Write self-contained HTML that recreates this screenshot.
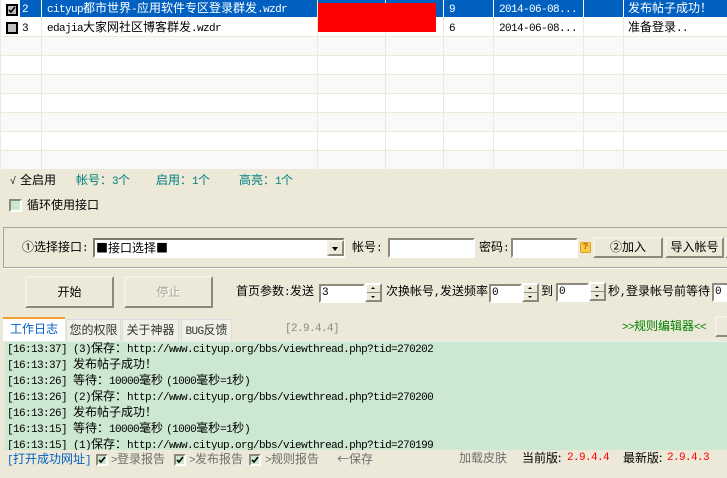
<!DOCTYPE html>
<html><head><meta charset="utf-8"><style>
html,body{margin:0;padding:0}
body{width:727px;height:478px;overflow:hidden;position:relative;background:#ece9d8;font:12px/16px "WenQuanYi Zen Hei","Noto Sans CJK SC",sans-serif;color:#000}
div,span.t{position:absolute;white-space:nowrap;box-sizing:border-box}
i{font:normal 11px/16px "Liberation Mono",monospace;letter-spacing:-.6px}
.h{left:0;width:727px;height:1px;background:#ece9d8}
.v{top:0;width:1px;height:169px;background:#ece9d8}
.in{background:#fff;border:2px solid;border-color:#8c8a7c #fff #fff #8c8a7c;padding-left:1px;font:11px/15px "Liberation Mono",monospace}
.b{background:#ece9d8;border:2px solid;border-color:#f4f2e8 #8c8a7c #8c8a7c #f4f2e8;text-align:center}
.cb{width:12px;height:12px;border:2px solid;border-color:#8c8a7c #fff #fff #8c8a7c;background:#cce8d0}
.cb svg,.ck svg{position:absolute;left:0;top:0}
.ck{left:6px;width:12px;height:12px;border:2px solid #000;background:#c0c0c0}
.sp{width:17px;background:#ece9d8;border:2px solid;border-color:#fff #8c8a7c #8c8a7c #fff}
.sp:before{content:"";position:absolute;left:4px;top:2px;border:2px solid transparent;border-top:0;border-bottom:2px solid #000}
.sp:after{content:"";position:absolute;left:4px;bottom:2px;border:2px solid transparent;border-bottom:0;border-top:2px solid #000}
.sp b{position:absolute;left:0;right:0;top:50%;height:1px;margin-top:-1px;background:#8c8a7c}
.w{color:#fff}.te{color:#008080}.g{color:#6e6e6e}.r{color:#f00}
.tab{top:319px;height:22px;background:#f0f0e6;border:1px solid #d8dce4;border-bottom:0;color:#333;text-align:center;line-height:20px}
.red{font:11px/16px "Liberation Mono",monospace;color:#f00;letter-spacing:-.6px}
.s{margin-left:3px}
</style></head><body>
<div style="left:0;top:0;width:727px;height:169px;background:#fff"></div>
<div style="left:20px;top:0;width:707px;height:17px;background:#0060c0"></div>
<div style="left:0;top:36px;width:727px;height:19px;background:#f9f9f9"></div>
<div style="left:0;top:74px;width:727px;height:19px;background:#f9f9f9"></div>
<div style="left:0;top:112px;width:727px;height:19px;background:#f9f9f9"></div>
<div style="left:0;top:150px;width:727px;height:19px;background:#f9f9f9"></div>
<div class="h" style="top:17px;background:#fff"></div><div class="h" style="top:36px"></div><div class="h" style="top:55px"></div><div class="h" style="top:74px"></div><div class="h" style="top:93px"></div><div class="h" style="top:112px"></div><div class="h" style="top:131px"></div><div class="h" style="top:150px"></div>
<div class="v" style="left:0"></div>
<div class="v" style="left:41px"></div><div class="v" style="left:317px"></div><div class="v" style="left:385px"></div><div class="v" style="left:443px"></div><div class="v" style="left:493px"></div><div class="v" style="left:583px"></div><div class="v" style="left:623px"></div>
<div style="left:41px;top:0;width:1px;height:17px;background:#fff"></div>
<div style="left:385px;top:0;width:1px;height:17px;background:#fff"></div>
<div style="left:443px;top:0;width:1px;height:17px;background:#fff"></div>
<div style="left:493px;top:0;width:1px;height:17px;background:#fff"></div>
<div style="left:583px;top:0;width:1px;height:17px;background:#fff"></div>
<div style="left:623px;top:0;width:1px;height:17px;background:#fff"></div>
<div style="left:318px;top:3px;width:118px;height:29px;background:#f00"></div>

<div class="ck" style="top:4px"><svg width="8" height="8"><path d="M1 4l2 2 4-5" fill="none" stroke="#000" stroke-width="1.6"/></svg></div>
<div class="ck" style="top:22px"></div>
<span class="t w" style="left:22px;top:0"><i>2</i></span>
<span class="t" style="left:22px;top:19px"><i>3</i></span>
<span class="t w" style="left:47px;top:0"><i>cityup</i>都市世界<i>-</i>应用软件专区登录群发<i>.wzdr</i></span>
<span class="t" style="left:47px;top:19px"><i>edajia</i>大家网社区博客群发<i>.wzdr</i></span>
<span class="t w" style="left:449px;top:0"><i>9</i></span>
<span class="t" style="left:449px;top:19px"><i>6</i></span>
<span class="t w" style="left:499px;top:0"><i>2014-06-08...</i></span>
<span class="t" style="left:499px;top:19px"><i>2014-06-08...</i></span>
<span class="t w" style="left:628px;top:0">发布帖子成功&#xFF01;</span>
<span class="t" style="left:628px;top:19px">准备登录<i>..</i></span>

<span class="t" style="left:10px;top:172px"><i style="letter-spacing:0;font-size:10px">√</i><span style="margin-left:4px">全启用</span></span>
<span class="t te" style="left:76px;top:172px">帐号&#xFF1A;<i>3</i>个</span>
<span class="t te" style="left:156px;top:172px">启用&#xFF1A;<i>1</i>个</span>
<span class="t te" style="left:239px;top:172px">高亮&#xFF1A;<i>1</i>个</span>
<div class="cb" style="left:9px;top:199px;width:13px;height:13px"></div>
<span class="t" style="left:27px;top:197px">循环使用接口</span>

<div style="left:3px;top:227px;width:730px;height:41px;border:1px solid #a8a698;box-shadow:0 1px 0 #fff"></div>
<span class="t" style="left:22px;top:239px">①选择接口<i>:</i></span>
<div class="in" style="left:93px;top:238px;width:252px;height:20px;font:12px/15px 'WenQuanYi Zen Hei','Noto Sans CJK SC',sans-serif;border-color:#7c7a6c #fff #fff #7c7a6c">■接口选择■</div>
<div class="b" style="left:327px;top:240px;width:17px;height:16px"><span style="position:absolute;left:3px;top:5px;border:3.5px solid transparent;border-bottom:0;border-top:4px solid #000"></span></div>
<span class="t" style="left:352px;top:239px">帐号<i>:</i></span>
<div class="in" style="left:388px;top:238px;width:87px;height:20px"></div>
<span class="t" style="left:479px;top:239px">密码<i>:</i></span>
<div class="in" style="left:511px;top:238px;width:67px;height:20px"></div>
<div style="left:580px;top:242px;width:11px;height:11px;background:#fbc84a;border:1px solid #e0a020;border-radius:2px;font:bold 9px/9px 'Liberation Mono',monospace;text-align:center;color:#a86a00">?</div>
<div class="b" style="left:593px;top:237px;width:70px;height:21px;line-height:16px">②加入</div>
<div class="b" style="left:665px;top:237px;width:59px;height:21px;line-height:16px">导入帐号</div>
<div class="b" style="left:725px;top:237px;width:10px;height:21px"></div>

<div class="b" style="left:25px;top:276px;width:89px;height:32px;line-height:27px">开始</div>
<div class="b" style="left:124px;top:276px;width:89px;height:32px;line-height:27px;color:#a5a396;text-shadow:1px 1px 0 #fff">停止</div>
<span class="t" style="left:236px;top:283px">首页参数<i>:</i>发送</span>
<div class="in" style="left:319px;top:284px;width:46px;height:19px">3</div>
<div class="sp" style="left:365px;top:283px;height:19px"><b></b></div>
<span class="t" style="left:386px;top:283px">次换帐号<i>,</i>发送频率</span>
<div class="in" style="left:489px;top:284px;width:33px;height:19px">0</div>
<div class="sp" style="left:522px;top:283px;height:19px"><b></b></div>
<span class="t" style="left:541px;top:283px">到</span>
<div class="in" style="left:556px;top:283px;width:33px;height:19px">0</div>
<div class="sp" style="left:589px;top:282px;height:19px"><b></b></div>
<span class="t" style="left:608px;top:283px">秒<i>,</i>登录帐号前等待</span>
<div class="in" style="left:712px;top:283px;width:30px;height:19px">0</div>

<div style="left:3px;top:317px;width:62px;height:24px;background:#fff;border-top:2px solid #f0a030;color:#0060c0;font-size:12px;text-align:center;line-height:20px">工作日志</div>
<div class="tab" style="left:66px;width:55px">您的权限</div>
<div class="tab" style="left:122px;width:57px">关于神器</div>
<div class="tab" style="left:181px;width:51px"><i>BUG</i>反馈</div>
<span class="t" style="left:285px;top:319px;color:#8a8a8a"><i>[2.9.4.4]</i></span>
<span class="t" style="left:622px;top:318px;color:#008000"><i>&gt;&gt;</i>规则编辑器<i>&lt;&lt;</i></span>
<div class="b" style="left:715px;top:316px;width:20px;height:21px"></div>

<div style="left:5px;top:341px;width:722px;height:109px;background:#cce8d0;overflow:hidden;border-top:1px solid #e4f0f0">
<span class="t" style="left:2px;top:-2px"><i>[16:13:37]&nbsp;(3)</i>保存&#xFF1A;<i>http://www.cityup.org/bbs/viewthread.php?tid=270202</i></span>
<span class="t" style="left:2px;top:14px"><i>[16:13:37]&nbsp;</i>发布帖子成功&#xFF01;</span>
<span class="t" style="left:2px;top:30px"><i>[16:13:26]&nbsp;</i>等待&#xFF1A;<i>10000</i>毫秒<i class="s">(1000</i>毫秒<i>=1</i>秒<i>)</i></span>
<span class="t" style="left:2px;top:46px"><i>[16:13:26]&nbsp;(2)</i>保存&#xFF1A;<i>http://www.cityup.org/bbs/viewthread.php?tid=270200</i></span>
<span class="t" style="left:2px;top:62px"><i>[16:13:26]&nbsp;</i>发布帖子成功&#xFF01;</span>
<span class="t" style="left:2px;top:78px"><i>[16:13:15]&nbsp;</i>等待&#xFF1A;<i>10000</i>毫秒<i class="s">(1000</i>毫秒<i>=1</i>秒<i>)</i></span>
<span class="t" style="left:2px;top:94px"><i>[16:13:15]&nbsp;(1)</i>保存&#xFF1A;<i>http://www.cityup.org/bbs/viewthread.php?tid=270199</i></span>
</div>

<span class="t" style="left:7px;top:451px;color:#0060c0"><i>[</i>打开成功网址<i>]</i></span>
<div class="cb" style="left:96px;top:454px"><svg width="8" height="8"><path d="M1 4l2 2 4-5" fill="none" stroke="#000" stroke-width="1.6"/></svg></div>
<span class="t g" style="left:111px;top:451px"><i>&gt;</i>登录报告</span>
<div class="cb" style="left:174px;top:454px"><svg width="8" height="8"><path d="M1 4l2 2 4-5" fill="none" stroke="#000" stroke-width="1.6"/></svg></div>
<span class="t g" style="left:189px;top:451px"><i>&gt;</i>发布报告</span>
<div class="cb" style="left:249px;top:454px"><svg width="8" height="8"><path d="M1 4l2 2 4-5" fill="none" stroke="#000" stroke-width="1.6"/></svg></div>
<span class="t g" style="left:265px;top:451px"><i>&gt;</i>规则报告</span>
<span class="t g" style="left:337px;top:451px">←保存</span>
<span class="t g" style="left:459px;top:450px">加载皮肤</span>
<span class="t" style="left:522px;top:450px">当前版<span style="display:inline-block;width:9px">:</span></span>
<span class="t red" style="left:567px;top:450px">2.9.4.4</span>
<span class="t" style="left:623px;top:450px">最新版<span style="display:inline-block;width:8px">:</span></span>
<span class="t red" style="left:667px;top:450px">2.9.4.3</span>
<span class="t red" style="left:725px;top:450px">:</span>
</body></html>
